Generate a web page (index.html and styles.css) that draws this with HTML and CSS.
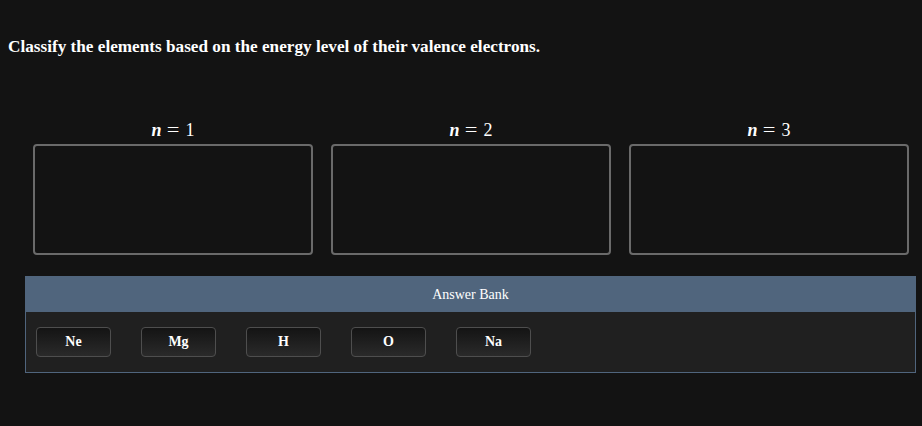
FILE: index.html
```html
<!DOCTYPE html>
<html>
<head>
<meta charset="utf-8">
<link rel="stylesheet" href="styles.css">
</head>
<body>
<div class="page">
  <p class="prompt">Classify the elements based on the energy level of their valence electrons.</p>
  <div class="bins">
    <div class="bin">
      <div class="bin-label"><i>n</i><span class="eq">=</span>1</div>
      <div class="bin-box"></div>
    </div>
    <div class="bin">
      <div class="bin-label"><i>n</i><span class="eq">=</span>2</div>
      <div class="bin-box"></div>
    </div>
    <div class="bin">
      <div class="bin-label"><i>n</i><span class="eq">=</span>3</div>
      <div class="bin-box"></div>
    </div>
  </div>
  <div class="bank">
    <div class="bank-head">Answer Bank</div>
    <div class="bank-body">
      <div class="chip">Ne</div>
      <div class="chip">Mg</div>
      <div class="chip">H</div>
      <div class="chip">O</div>
      <div class="chip">Na</div>
    </div>
  </div>
</div>
</body>
</html>
```

FILE: styles.css
```css
html, body {
  margin: 0;
  padding: 0;
  background: #131313;
  color: #fff;
  font-family: "Liberation Serif", "Times New Roman", serif;
}
.page {
  width: 922px;
  height: 426px;
  overflow: hidden;
}
.prompt {
  margin: 0;
  padding: 37px 8px 0;
  font-size: 17.2px;
  font-weight: bold;
  line-height: 20px;
}
.bins {
  display: flex;
  gap: 18px;
  padding-left: 33px;
  margin-top: 63px;
}
.bin {
  width: 280px;
  display: flex;
  flex-direction: column;
  gap: 4px;
}
.bin-label {
  text-align: center;
  font-size: 18px;
  line-height: 20px;
  height: 20px;
}
.bin-label i {
  font-weight: bold;
  font-style: italic;
}
.bin-label .eq {
  display: inline-block;
  margin: 0 7px;
  transform: scaleX(1.25);
}
.bin-box {
  box-sizing: border-box;
  height: 111px;
  border: 2px solid #6a6a6a;
  border-radius: 4px;
}
.bank {
  margin: 21px 0 0 25px;
  width: 891px;
}
.bank-head {
  height: 36px;
  background: #50657d;
  text-align: center;
  font-size: 14px;
  line-height: 37px;
}
.bank-body {
  box-sizing: border-box;
  height: 61px;
  background: #202020;
  border: 1px solid #50657d;
  border-top: none;
  padding: 15px 10px;
  display: flex;
  gap: 30px;
}
.chip {
  box-sizing: border-box;
  width: 75px;
  height: 30px;
  border: 1px solid #4e4e4e;
  border-radius: 4px;
  background: linear-gradient(#141414, #2a2a2a);
  text-align: center;
  font-size: 14px;
  font-weight: bold;
  line-height: 28px;
}
```
